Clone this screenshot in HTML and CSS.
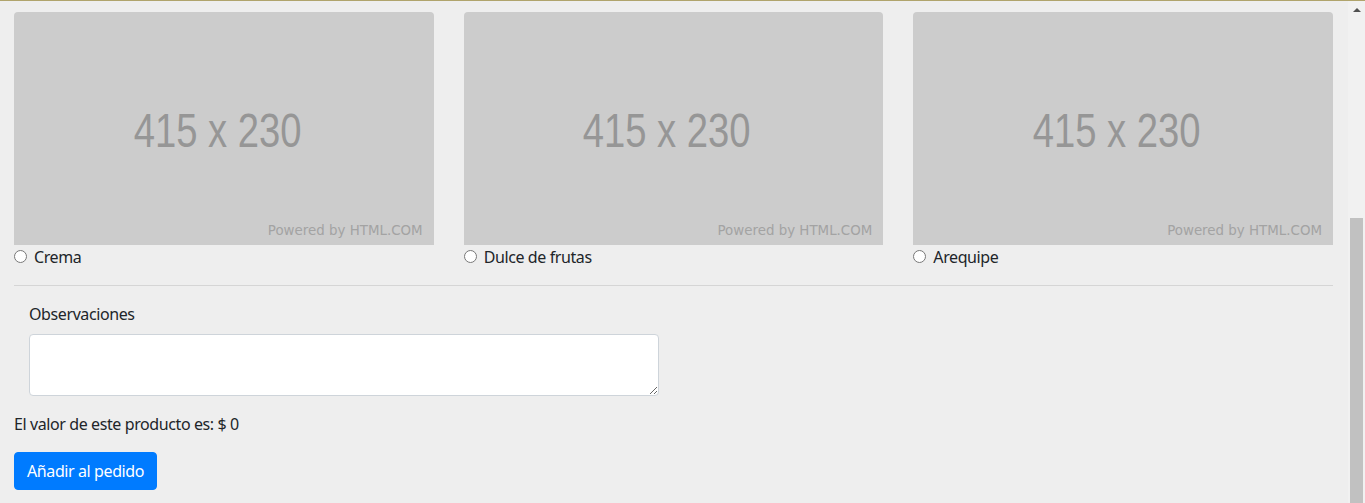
FILE: index.html
```html
<!DOCTYPE html>
<html lang="es">
<head>
<meta charset="utf-8">
<title>Pedido</title>
<link rel="stylesheet" href="styles.css">
</head>
<body>
<div class="page">
  <main class="main">
    <div class="options">
      <div class="option">
        <div class="placeholder">
          <span class="size">415 x 230</span>
          <span class="powered">Powered by HTML.COM</span>
        </div>
        <label class="choice"><input type="radio" name="relleno" class="radio"><span>Crema</span></label>
      </div>
      <div class="option">
        <div class="placeholder">
          <span class="size">415 x 230</span>
          <span class="powered">Powered by HTML.COM</span>
        </div>
        <label class="choice"><input type="radio" name="relleno" class="radio"><span>Dulce de frutas</span></label>
      </div>
      <div class="option">
        <div class="placeholder">
          <span class="size">415 x 230</span>
          <span class="powered">Powered by HTML.COM</span>
        </div>
        <label class="choice"><input type="radio" name="relleno" class="radio"><span>Arequipe</span></label>
      </div>
    </div>
    <hr class="divider">
    <div class="form-group">
      <label class="field-label" for="obs">Observaciones</label>
      <textarea id="obs" class="textarea" rows="2"></textarea>
    </div>
    <p class="price">El valor de este producto es: $ 0</p>
    <button class="btn" type="button">Añadir al pedido</button>
  </main>
  <div class="scrollbar">
    <div class="arrow"></div>
    <div class="thumb"></div>
  </div>
</div>
</body>
</html>
```

FILE: styles.css
```css
* { box-sizing: border-box; }
html, body { margin: 0; height: 100%; }
body {
  background: #eeeeee;
  color: #212529;
  font-family: "Segoe UI", "Noto Sans", sans-serif;
  font-size: 16px;
  line-height: 1.5;
  letter-spacing: -0.4px;
  overflow: hidden;
}
.page {
  display: flex;
  height: 100vh;
  border-top: 1px solid #b0a46c;
}
.main {
  flex: 1;
  padding: 11px 15px 0 14px;
}
.options {
  display: grid;
  grid-template-columns: repeat(3, 1fr);
  column-gap: 30px;
}
.placeholder {
  position: relative;
  height: 233px;
  background: #cccccc;
  border-radius: 4px 4px 0 0;
  display: flex;
  align-items: center;
  justify-content: center;
  letter-spacing: 0;
}
.size {
  display: inline-block;
  font-family: "Liberation Sans", Arial, sans-serif;
  font-size: 49px;
  line-height: 1;
  color: #969696;
  transform: scaleX(0.78);
  margin: 4px 13px 0 0;
}
.powered {
  position: absolute;
  right: 11px;
  bottom: 6px;
  font-family: "DejaVu Sans", Verdana, sans-serif;
  font-size: 13.4px;
  line-height: 16px;
  color: #a3a3a3;
}
.choice {
  display: flex;
  align-items: center;
  height: 24px;
}
.radio {
  width: 13px;
  height: 13px;
  margin: -2px 7px 0 0;
}
.divider {
  margin: 16px 0;
  border: 0;
  border-top: 1px solid rgba(0, 0, 0, 0.1);
}
.form-group {
  padding-left: 15px;
  margin-bottom: 16px;
}
.field-label {
  display: block;
  margin-bottom: 8px;
}
.textarea {
  display: block;
  width: 630px;
  height: 62px;
  padding: 6px 12px;
  border: 1px solid #ced4da;
  border-radius: 4px;
  background: #fff;
  font: inherit;
  color: #495057;
}
.price {
  margin: 0 0 16px;
}
.btn {
  font: inherit;
  letter-spacing: inherit;
  color: #fff;
  background: #007bff;
  border: 1px solid #007bff;
  border-radius: 4px;
  padding: 6px 12px;
  line-height: 24px;
}
.scrollbar {
  width: 17px;
  background: #f1f1f1;
  display: flex;
  flex-direction: column;
  align-items: center;
}
.arrow {
  margin-top: 7px;
  width: 0;
  height: 0;
  border-left: 4px solid transparent;
  border-right: 4px solid transparent;
  border-bottom: 4px solid #505050;
}
.thumb {
  margin-top: 206px;
  width: 13px;
  flex: 1;
  background: #c1c1c1;
}
```
